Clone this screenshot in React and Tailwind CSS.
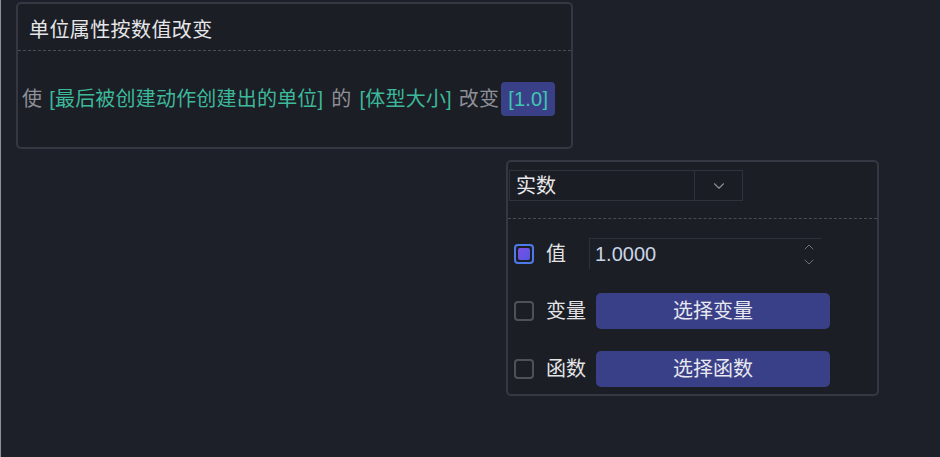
import { ChevronDown, ChevronUp } from "lucide-react";

const font = { fontFamily: '"Liberation Sans", "Noto Sans CJK SC", sans-serif' };

const Check = ({ checked }) =>
    checked ? (
        <span className="flex h-[20px] w-[20px] items-center justify-center rounded-[4px] border-2 border-[#4d7ae6] bg-[#1c1e26]">
            <span className="h-[12px] w-[12px] rounded-[2px] bg-gradient-to-br from-[#7a4fe6] to-[#5257e0]" />
        </span>
    ) : (
        <span className="h-[20px] w-[20px] rounded-[4px] border-2 border-[#4f5159]" />
    );

const App = () => {
    return (
        <div
            className="h-[457px] w-[940px] overflow-hidden border-l border-[#8e9099] bg-[#1e2029] pt-[2px]"
            style={font}
        >
            {/* Card 1 */}
            <div className="ml-[15px] h-[147px] w-[557px] rounded-[5px] border-2 border-[#353843] bg-[#1c1e26]">
                <div className="flex h-[47px] items-center border-b border-dashed border-[#4a4c55] pl-[11px] pt-[5px] text-[20px] tracking-[0.4px] text-[#e6e6e8]">
                    单位属性按数值改变
                </div>
                <div className="flex h-[96px] items-center whitespace-nowrap pl-[4px] text-[20px] tracking-[0.2px]">
                    <span className="text-[#8e9098]">使</span>
                    <span className="ml-[7px] text-[#3cb99a]">[最后被创建动作创建出的单位]</span>
                    <span className="ml-[8px] text-[#8e9098]">的</span>
                    <span className="ml-[8px] text-[#3cb99a]">[体型大小]</span>
                    <span className="ml-[7px] text-[#8e9098]">改变</span>
                    <span className="ml-[2px] flex h-[34px] items-center rounded-[4px] bg-[#3a4088] px-[7px] text-[#3fc7b0]">
                        [1.0]
                    </span>
                </div>
            </div>

            {/* Card 2 */}
            <div className="ml-[505px] mt-[11px] h-[236px] w-[373px] rounded-[5px] border-2 border-[#353843] bg-[#1c1e26] pt-[8px]">
                <div className="flex px-[1px] pb-[17px]">
                    <div className="flex h-[31px] w-[234px] border border-[#30323b] bg-[#1b1d24]">
                        <div className="flex flex-1 items-center pl-[6px] text-[20px] text-[#e8e8ea]">实数</div>
                        <div className="flex w-[48px] items-center justify-center border-l border-[#30323b] text-[#8c8e96]">
                            <ChevronDown size={18} strokeWidth={1.5} />
                        </div>
                    </div>
                </div>
                <div className="border-t border-dashed border-[#4a4c55]" />

                <div className="flex flex-col px-[6px] pt-[19px]">
                    <div className="flex h-[31px] items-center">
                        <Check checked />
                        <span className="ml-[12px] w-[43px] text-[20px] text-[#e4e4e6]">值</span>
                        <div className="flex h-[31px] w-[232px] items-center border-l border-t border-[#2f313a] pl-[5px] pr-[4px]">
                            <span className="flex-1 text-[20px] text-[#c9d6e6]">1.0000</span>
                            <span className="flex flex-col items-center text-[#6e7078]">
                                <ChevronUp size={16} strokeWidth={1.5} className="-mb-[1px]" />
                                <ChevronDown size={16} strokeWidth={1.5} />
                            </span>
                        </div>
                    </div>

                    <div className="mt-[24px] flex h-[36px] items-center">
                        <Check />
                        <span className="ml-[12px] w-[50px] text-[20px] text-[#e4e4e6]">变量</span>
                        <button className="h-[36px] w-[234px] rounded-[5px] bg-[#3a4088] text-[20px] text-[#e8e8f0]">
                            选择变量
                        </button>
                    </div>

                    <div className="mt-[22px] flex h-[36px] items-center">
                        <Check />
                        <span className="ml-[12px] w-[50px] text-[20px] text-[#e4e4e6]">函数</span>
                        <button className="h-[36px] w-[234px] rounded-[5px] bg-[#3a4088] text-[20px] text-[#e8e8f0]">
                            选择函数
                        </button>
                    </div>
                </div>
            </div>
        </div>
    );
};

export default App;
